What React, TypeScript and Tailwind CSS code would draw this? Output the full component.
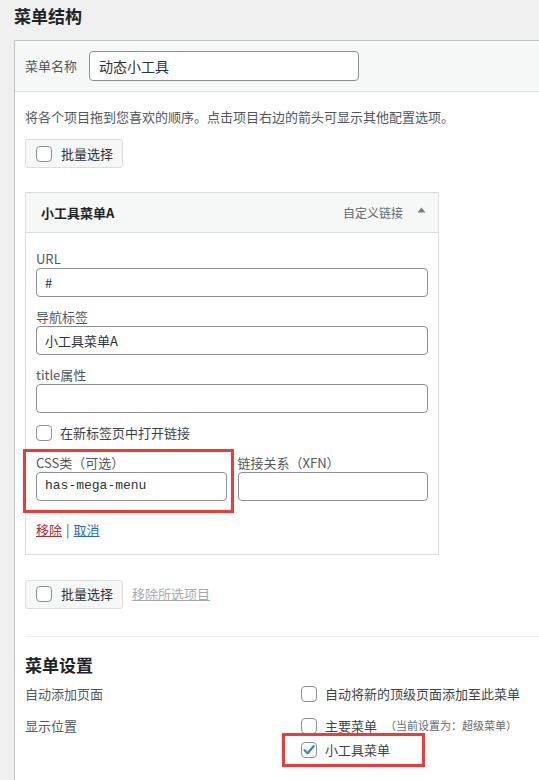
import React from "react";

const font = { fontFamily: '"Noto Sans CJK SC", "Noto Sans", sans-serif' };

function Box({ checked = false }: { checked?: boolean }) {
  return (
    <span className="flex h-[16px] w-[16px] shrink-0 items-center justify-center rounded-[4px] border border-[#8c8f94] bg-white">
      {checked && (
        <svg width="14" height="14" viewBox="0 0 14 14">
          <path d="M2.5 7.2 L5.6 10.2 L11.6 3.2" fill="none" stroke="#3582c4" strokeWidth="2.2" strokeLinecap="round" strokeLinejoin="round" />
        </svg>
      )}
    </span>
  );
}

function Field({ label, value, mono = false }: { label: string; value?: string; mono?: boolean }) {
  return (
    <div className="flex flex-col">
      <div className="h-[18px] text-[13px] leading-[18px] text-[#50575e]">{label}</div>
      <div
        className="flex h-[29px] items-center rounded-[4px] border border-[#8c8f94] bg-white px-[8px] text-[13px] text-[#2c3338]"
        style={mono ? { fontFamily: '"Liberation Mono", "DejaVu Sans Mono", monospace', fontSize: 13 } : undefined}
      >
        {value}
      </div>
    </div>
  );
}

function BulkButton() {
  return (
    <div className="flex h-[29px] w-[98px] items-center gap-[9px] rounded-[3px] border border-[#dcdcde] bg-[#f6f7f7] pl-[10px] text-[13px] text-[#2c3338]">
      <Box />
      <span>批量选择</span>
    </div>
  );
}

export default function App() {
  return (
    <div className="relative h-[780px] w-[539px] overflow-hidden bg-[#f0f0f1]" style={font}>
      <h2 className="pl-[14px] pt-[5px] text-[17px] font-bold leading-[22px] text-[#1d2327]">菜单结构</h2>

      <div className="ml-[14px] mt-[13px] w-[600px] border border-[#c3c4c7] bg-white">
        <div className="flex h-[51px] items-center gap-[12px] border-b border-[#dcdcde] bg-[#f6f7f7] pl-[10px]">
          <span className="text-[13px] text-[#50575e]">菜单名称</span>
          <div className="flex h-[30px] w-[270px] items-center rounded-[4px] border border-[#8c8f94] bg-white px-[9px] text-[14px] text-[#2c3338]">
            动态小工具
          </div>
        </div>

        <div className="px-[10px] pb-[200px]">
          <p className="pt-[15px] text-[13px] leading-[20px] text-[#50575e]">将各个项目拖到您喜欢的顺序。点击项目右边的箭头可显示其他配置选项。</p>

          <div className="mt-[12px]">
            <BulkButton />
          </div>

          <div className="mt-[24px] w-[414px] border border-[#dcdcde] bg-white">
            <div className="flex h-[40px] items-center border-b border-[#dcdcde] bg-[#f6f7f7] pl-[15px] pr-[12px]">
              <span className="text-[13px] font-bold text-[#1d2327]">小工具菜单A</span>
              <span className="ml-auto text-[12px] text-[#646970]">自定义链接</span>
              <svg className="ml-[14px] -mt-[6px]" width="9" height="6" viewBox="0 0 9 6">
                <path d="M0.5 5.5 L4.5 0.5 L8.5 5.5 Z" fill="#787c82" />
              </svg>
            </div>
            <div className="px-[10px] pb-[15px] pt-[17px]">
              <div className="flex flex-col gap-[11px]">
                <Field label="URL" value="#" />
                <Field label="导航标签" value="小工具菜单A" />
                <Field label="title属性" />
              </div>
              <div className="mt-[10px] flex items-center gap-[8px] text-[13px] text-[#3c434a]">
                <Box />
                <span>在新标签页中打开链接</span>
              </div>
              <div className="mt-[11px] grid grid-cols-2 gap-[11px]">
                <Field label="CSS类（可选）" value="has-mega-menu" mono />
                <Field label="链接关系（XFN）" />
              </div>
              <div className="mt-[20px] text-[13px] leading-[18px]">
                <a className="text-[#b32d2e] underline">移除</a>
                <span className="mx-[4px] text-[#50575e]">|</span>
                <a className="text-[#2271b1] underline">取消</a>
              </div>
            </div>
          </div>

          <div className="mt-[25px] flex items-center gap-[9px]">
            <BulkButton />
            <span className="text-[13px] text-[#a7aaad] underline">移除所选项目</span>
          </div>

          <div className="mt-[27px] border-t border-[#f0f0f1]" />

          <h3 className="mt-[17px] text-[17px] font-bold leading-[22px] text-[#1d2327]">菜单设置</h3>

          <div className="mt-[8px] flex text-[13px] text-[#50575e]">
            <div className="w-[276px] leading-[20px]">自动添加页面</div>
            <div className="flex items-center gap-[8px] text-[#3c434a]">
              <Box />
              <span className="leading-[20px]">自动将新的顶级页面添加至此菜单</span>
            </div>
          </div>
          <div className="mt-[12px] flex text-[13px] text-[#50575e]">
            <div className="w-[276px] leading-[20px]">显示位置</div>
            <div className="flex flex-col gap-[4px]">
              <div className="flex items-center gap-[8px] text-[#3c434a]">
                <Box />
                <span className="leading-[20px]">主要菜单</span>
                <span className="text-[11px] text-[#646970]">（当前设置为：超级菜单）</span>
              </div>
              <div className="flex items-center gap-[8px] text-[#3c434a]">
                <Box checked />
                <span className="leading-[20px]">小工具菜单</span>
              </div>
            </div>
          </div>
        </div>
      </div>

      <div className="absolute left-[23px] top-[449px] h-[64px] w-[211px] border-[3px] border-[#f03a3a]" />
      <div className="absolute left-[282px] top-[733px] h-[34px] w-[143px] border-[3px] border-[#f03a3a]" />
    </div>
  );
}
